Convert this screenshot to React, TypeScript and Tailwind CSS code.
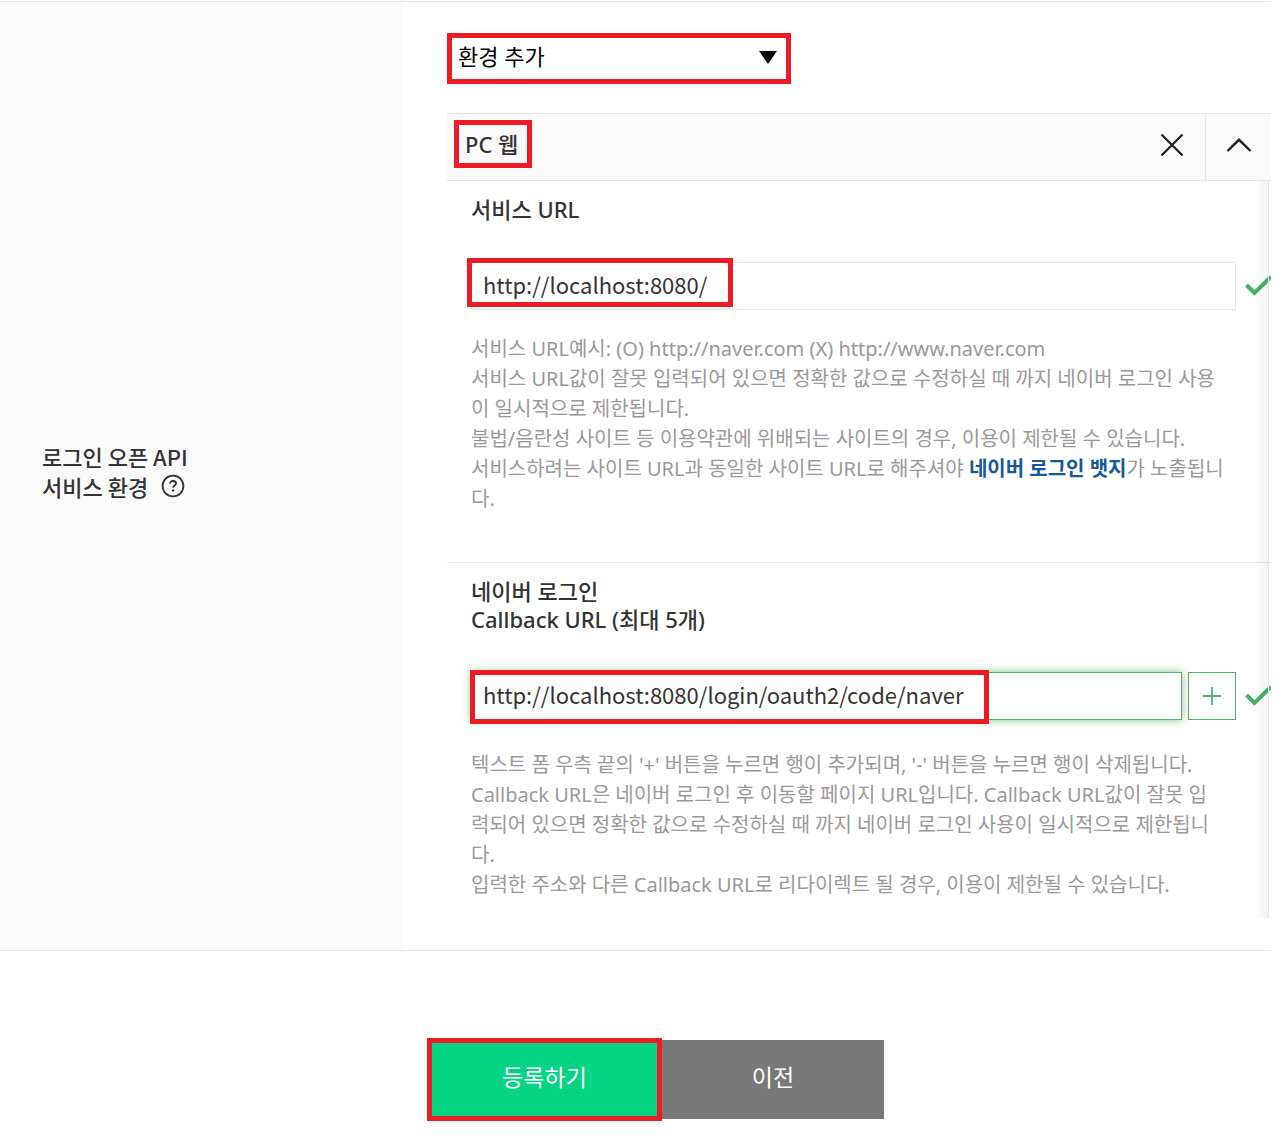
import { useState } from "react"
import type { ReactNode } from "react"

const CheckIcon = () => (
  <svg
    width="26"
    height="24"
    viewBox="0 0 26 24"
    fill="none"
    className="ml-[9px] shrink-0"
    aria-hidden="true"
  >
    <path d="M1.5 11L9.5 19L26 2.8" stroke="#43b363" strokeWidth="4" />
  </svg>
)

const HelpIcon = () => (
  <svg width="24" height="24" viewBox="0 0 24 24" fill="none" aria-hidden="true">
    <circle cx="12" cy="12" r="10.4" stroke="#333" strokeWidth="1.8" />
    <path
      d="M9 9.6C9 7.9 10.2 7 12 7s3 .9 3 2.4c0 2-2.9 2.1-2.9 4.3"
      stroke="#333"
      strokeWidth="1.8"
    />
    <circle cx="12.1" cy="16.4" r="1.2" fill="#333" />
  </svg>
)

// red frame laid over the part of a field that needs attention
const Highlight = ({ className }: { className: string }) => (
  <span
    className={`pointer-events-none absolute border-5 border-[#ed1c24] ${className}`}
  />
)

const HelpText = ({ children }: { children: ReactNode }) => (
  <p className="pr-[35px] text-[20px] leading-[30px] text-[#999] break-all">
    {children}
  </p>
)

const EnvironmentPanel = () => {
  const [serviceUrl, setServiceUrl] = useState("http://localhost:8080/")
  const [callbackUrl, setCallbackUrl] = useState(
    "http://localhost:8080/login/oauth2/code/naver"
  )

  return (
    <section className="mt-[29px] border-t border-[#e5e5e5]">
      <header className="flex h-[67px] items-stretch border-b border-[#e5e5e5] bg-[#fafafa]">
        <div className="flex flex-1 items-start pt-[6px] pl-[7px]">
          <h3 className="flex h-[48px] w-[78px] items-center border-5 border-[#ed1c24] pl-[6px] text-[22px] font-medium whitespace-nowrap">
            PC 웹
          </h3>
        </div>
        <button
          type="button"
          aria-label="삭제"
          className="flex w-[66px] items-center justify-center pb-[5px]"
        >
          <svg width="24" height="24" viewBox="0 0 24 24" fill="none">
            <path d="M1.5 1.5L22.5 22.5M22.5 1.5L1.5 22.5" stroke="#222" strokeWidth="2.3" />
          </svg>
        </button>
        <button
          type="button"
          aria-label="접기"
          className="flex w-[66px] items-center justify-center border-l border-[#e5e5e5] pb-[5px]"
        >
          <svg width="26" height="16" viewBox="0 0 26 16" fill="none">
            <path d="M1.5 14L13 2.8L24.5 14" stroke="#222" strokeWidth="2.4" />
          </svg>
        </button>
      </header>

      <div className="relative">
        <div className="border-b border-[#e5e5e5] pt-[14px] pb-[48px] pl-[24px]">
          <label
            htmlFor="service-url"
            className="block text-[22px] leading-[28px] font-medium"
          >
            서비스 URL
          </label>
          <div className="relative mt-[39px] flex items-center">
            <input
              id="service-url"
              value={serviceUrl}
              onChange={(e) => setServiceUrl(e.target.value)}
              className="h-[48px] min-w-0 flex-1 border border-[#e5e5e5] pb-[4px] pl-[11px] font-['Noto_Sans_CJK_KR',sans-serif] text-[22px] outline-none"
            />
            <CheckIcon />
            <Highlight className="-top-[4px] -left-[4px] h-[49px] w-[266px]" />
          </div>
          <div className="mt-[24px]">
            <HelpText>
              서비스 URL예시: (O) http://naver.com (X) http://www.naver.com
              <br />
              서비스 URL값이 잘못 입력되어 있으면 정확한 값으로 수정하실 때 까지
              네이버 로그인 사용
              <br />
              이 일시적으로 제한됩니다.
              <br />
              불법/음란성 사이트 등 이용약관에 위배되는 사이트의 경우, 이용이 제한될
              수 있습니다.
              <br />
              서비스하려는 사이트 URL과 동일한 사이트 URL로 해주셔야{" "}
              <a href="#badge" className="font-bold text-[#145a9c]">
                네이버 로그인 뱃지
              </a>
              가 노출됩니
              <br />
              다.
            </HelpText>
          </div>
        </div>

        <div className="pt-[14px] pb-[18px] pl-[24px]">
          <label
            htmlFor="callback-url"
            className="block text-[22px] leading-[28px] font-medium"
          >
            네이버 로그인
            <br />
            Callback URL (최대 5개)
          </label>
          <div className="relative mt-[39px] flex items-center">
            <input
              id="callback-url"
              value={callbackUrl}
              onChange={(e) => setCallbackUrl(e.target.value)}
              className="h-[48px] min-w-0 flex-1 border border-[#4bb56b] pb-[4px] pl-[11px] font-['Noto_Sans_CJK_KR',sans-serif] text-[22px] shadow-[0_0_9px_rgba(60,160,70,0.6)] outline-none"
            />
            <button
              type="button"
              aria-label="행 추가"
              className="ml-[6px] flex h-[48px] w-[48px] items-center justify-center border border-[#4bb56b]"
            >
              <svg width="18" height="18" viewBox="0 0 18 18" fill="none">
                <path d="M9 0V18M0 9H18" stroke="#4bb56b" strokeWidth="1.8" />
              </svg>
            </button>
            <CheckIcon />
            <Highlight className="-top-[2px] -left-[1px] h-[54px] w-[519px]" />
          </div>
          <div className="mt-[30px]">
            <HelpText>
              텍스트 폼 우측 끝의 '+' 버튼을 누르면 행이 추가되며, '-' 버튼을 누르면
              행이 삭제됩니다.
              <br />
              Callback URL은 네이버 로그인 후 이동할 페이지 URL입니다. Callback
              URL값이 잘못 입
              <br />
              력되어 있으면 정확한 값으로 수정하실 때 까지 네이버 로그인 사용이
              일시적으로 제한됩니
              <br />
              다.
              <br />
              입력한 주소와 다른 Callback URL로 리다이렉트 될 경우, 이용이 제한될 수
              있습니다.
            </HelpText>
          </div>
        </div>

        {/* scroll edge */}
        <div className="pointer-events-none absolute inset-y-0 right-[2px] w-[13px] border-r border-[#e5e5e5] bg-linear-to-r from-transparent to-black/5" />
      </div>
    </section>
  )
}

export default function App() {
  return (
    <main className="bg-white pt-px pr-[11px] pb-[26px] font-['Noto_Sans','Noto_Sans_CJK_KR',sans-serif] text-[#333]">
      <form onSubmit={(e) => e.preventDefault()}>
        <div className="flex border-y border-[#e5e5e5]">
          <div className="flex w-[402px] shrink-0 items-center bg-[#fafafa] pb-[10px] pl-[42px]">
            <h2 className="font-['Noto_Sans_CJK_KR',sans-serif] text-[22px] leading-[30px] font-medium">
              로그인 오픈 API
              <br />
              <span className="flex items-center">
                서비스 환경
                <button type="button" aria-label="도움말" className="ml-[13px]">
                  <HelpIcon />
                </button>
              </span>
            </h2>
          </div>

          <div className="min-w-0 flex-1 overflow-hidden pt-[31px] pb-[32px] pl-[45px]">
            <div className="relative w-[344px]">
              <select
                aria-label="환경 추가"
                className="block h-[51px] w-full appearance-none border-5 border-[#ed1c24] bg-white pb-[5px] pl-[6px] text-[22px] text-black outline-none"
              >
                <option>환경 추가</option>
              </select>
              <svg
                width="18"
                height="13"
                viewBox="0 0 18 13"
                className="pointer-events-none absolute top-[18px] right-[14px]"
                aria-hidden="true"
              >
                <path d="M0 0H18L9 13Z" fill="#000" />
              </svg>
            </div>
            <EnvironmentPanel />
          </div>
        </div>

        <div className="mt-[87px] flex items-center justify-center pl-[40px] text-[23px] text-white">
          <button
            type="submit"
            className="h-[83px] w-[235px] border-5 border-[#ed1c24] bg-[#04d484] pb-[4px]"
          >
            등록하기
          </button>
          <button type="button" className="h-[79px] w-[222px] bg-[#787878] pb-[4px]">
            이전
          </button>
        </div>
      </form>
    </main>
  )
}
